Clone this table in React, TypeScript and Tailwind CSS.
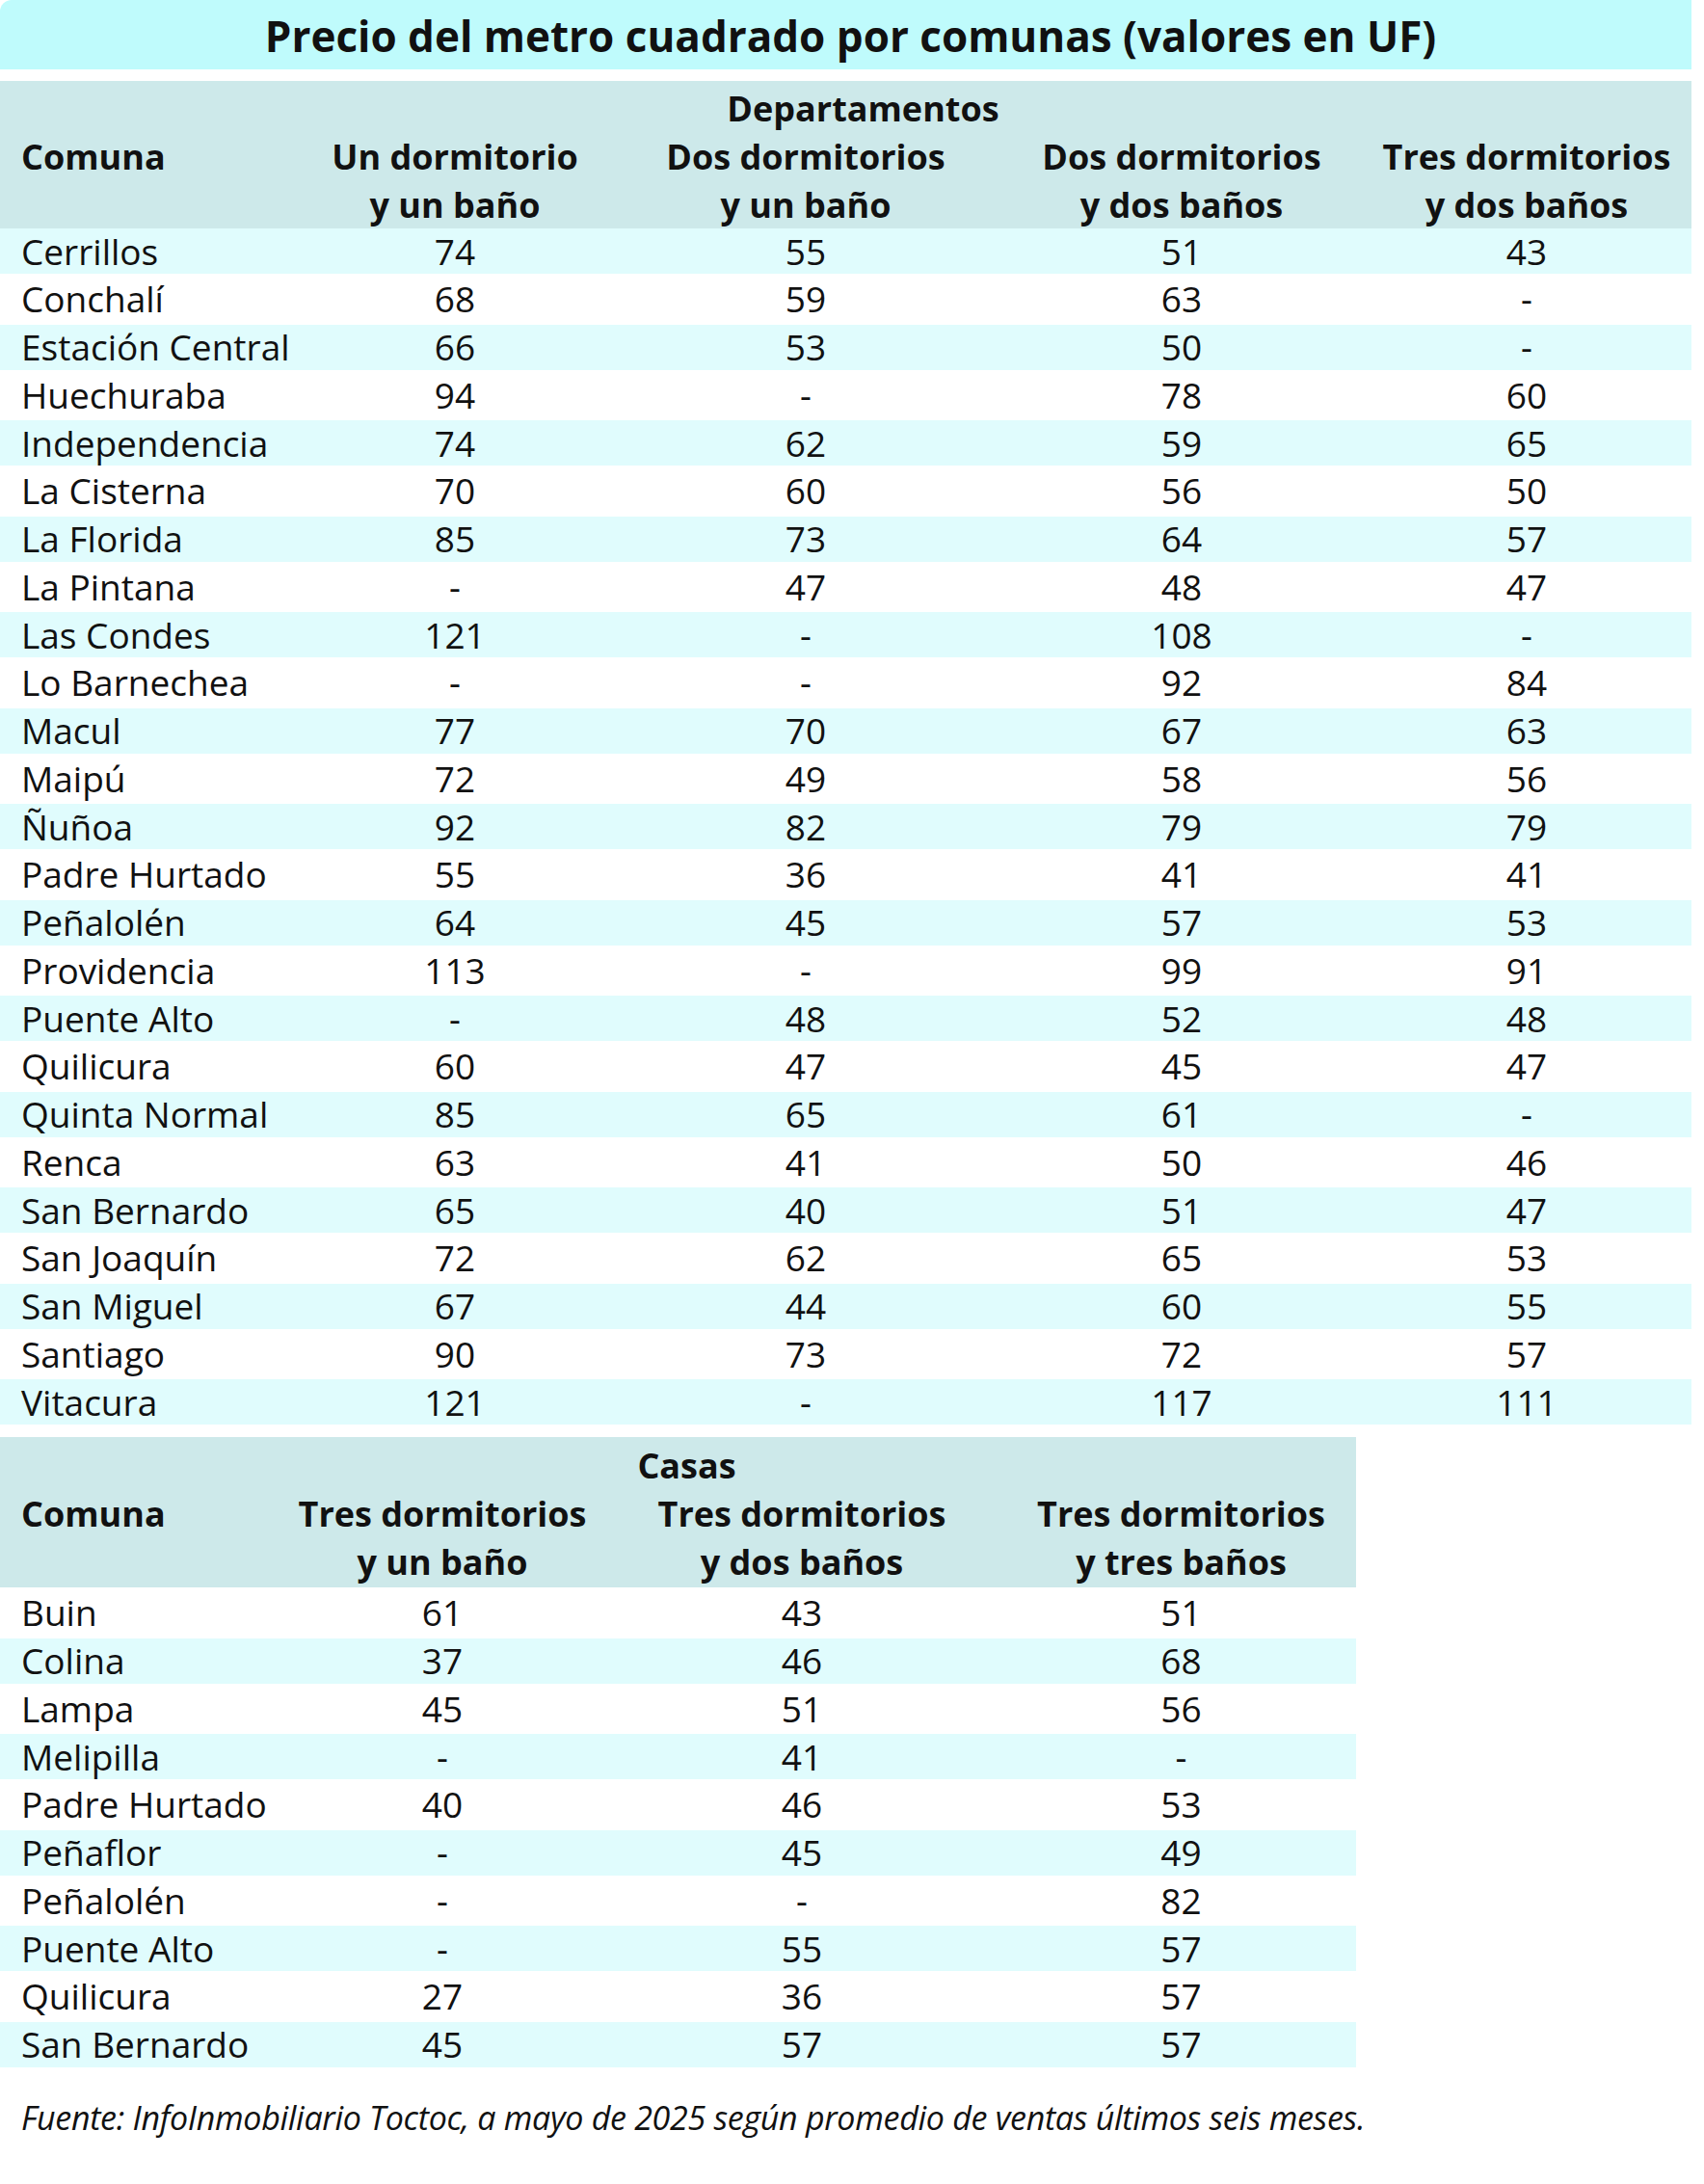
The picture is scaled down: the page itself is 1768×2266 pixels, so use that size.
const departamentos: [string, string, string, string, string][] = [
  ["Cerrillos", "74", "55", "51", "43"],
  ["Conchalí", "68", "59", "63", "-"],
  ["Estación Central", "66", "53", "50", "-"],
  ["Huechuraba", "94", "-", "78", "60"],
  ["Independencia", "74", "62", "59", "65"],
  ["La Cisterna", "70", "60", "56", "50"],
  ["La Florida", "85", "73", "64", "57"],
  ["La Pintana", "-", "47", "48", "47"],
  ["Las Condes", "121", "-", "108", "-"],
  ["Lo Barnechea", "-", "-", "92", "84"],
  ["Macul", "77", "70", "67", "63"],
  ["Maipú", "72", "49", "58", "56"],
  ["Ñuñoa", "92", "82", "79", "79"],
  ["Padre Hurtado", "55", "36", "41", "41"],
  ["Peñalolén", "64", "45", "57", "53"],
  ["Providencia", "113", "-", "99", "91"],
  ["Puente Alto", "-", "48", "52", "48"],
  ["Quilicura", "60", "47", "45", "47"],
  ["Quinta Normal", "85", "65", "61", "-"],
  ["Renca", "63", "41", "50", "46"],
  ["San Bernardo", "65", "40", "51", "47"],
  ["San Joaquín", "72", "62", "65", "53"],
  ["San Miguel", "67", "44", "60", "55"],
  ["Santiago", "90", "73", "72", "57"],
  ["Vitacura", "121", "-", "117", "111"],
];

const casas: [string, string, string, string][] = [
  ["Buin", "61", "43", "51"],
  ["Colina", "37", "46", "68"],
  ["Lampa", "45", "51", "56"],
  ["Melipilla", "-", "41", "-"],
  ["Padre Hurtado", "40", "46", "53"],
  ["Peñaflor", "-", "45", "49"],
  ["Peñalolén", "-", "-", "82"],
  ["Puente Alto", "-", "55", "57"],
  ["Quilicura", "27", "36", "57"],
  ["San Bernardo", "45", "57", "57"],
];

const deptCols = "grid grid-cols-[290px_364px_364px_416px_321px]";
const casaCols = "grid grid-cols-[270px_378px_368px_391px]";

const App = () => {
  return (
    <div className="w-[1768px] h-[2266px] bg-white text-[#111] font-['Open_Sans',sans-serif] text-[37px] leading-[46px]">
      <div className="w-[1755px]">
        {/* Title */}
        <div className="h-[72px] bg-[#bffbfc] rounded-tl-[12px] flex items-center justify-center pl-[10px] pt-[2px]">
          <h1 className="font-bold text-[44px] leading-[60px] whitespace-nowrap">
            Precio del metro cuadrado por comunas (valores en UF)
          </h1>
        </div>

        {/* Departamentos */}
        <div className="mt-[12px] bg-[#cde9ea] pt-[4px] font-bold text-[36px] leading-[50px] h-[153px]">
          <div className="text-center pl-[36px]">Departamentos</div>
          <div className={deptCols}>
            <div className="pl-[22px]">Comuna</div>
            <div className="text-center whitespace-nowrap">
              Un dormitorio
              <br />y un baño
            </div>
            <div className="text-center whitespace-nowrap">
              Dos dormitorios
              <br />y un baño
            </div>
            <div className="text-center whitespace-nowrap">
              Dos dormitorios
              <br />y dos baños
            </div>
            <div className="text-center whitespace-nowrap pr-[21px]">
              Tres dormitorios
              <br />y dos baños
            </div>
          </div>
        </div>
        <div>
          {departamentos.map((row, i) => (
            <div
              key={row[0]}
              className={`${deptCols} items-center ${i % 2 === 0 ? "h-[47px] bg-[#e0fcfd]" : "h-[52.5px]"}`}
            >
              <div className="pl-[22px] whitespace-nowrap">{row[0]}</div>
              <div className="text-center">{row[1]}</div>
              <div className="text-center">{row[2]}</div>
              <div className="text-center">{row[3]}</div>
              <div className="text-center pr-[21px]">{row[4]}</div>
            </div>
          ))}
        </div>

        {/* Casas */}
        <div className="w-[1407px] mt-[13px]">
          <div className="bg-[#cde9ea] pt-[5px] font-bold text-[36px] leading-[50px] h-[156px]">
            <div className="text-center pl-[18px]">Casas</div>
            <div className={casaCols}>
              <div className="pl-[22px]">Comuna</div>
              <div className="text-center whitespace-nowrap">
                Tres dormitorios
                <br />y un baño
              </div>
              <div className="text-center whitespace-nowrap">
                Tres dormitorios
                <br />y dos baños
              </div>
              <div className="text-center whitespace-nowrap pl-[28px]">
                Tres dormitorios
                <br />y tres baños
              </div>
            </div>
          </div>
          {casas.map((row, i) => (
            <div
              key={row[0]}
              className={`${casaCols} items-center ${i % 2 === 1 ? "h-[47px] bg-[#e0fcfd]" : "h-[52.5px]"}`}
            >
              <div className="pl-[22px] whitespace-nowrap">{row[0]}</div>
              <div className="text-center">{row[1]}</div>
              <div className="text-center">{row[2]}</div>
              <div className="text-center pl-[28px]">{row[3]}</div>
            </div>
          ))}
        </div>

        <p className="mt-[27px] pl-[22px] italic text-[34px] tracking-[-0.3px] leading-[50px] whitespace-nowrap">
          Fuente: InfoInmobiliario Toctoc, a mayo de 2025 según promedio de ventas últimos seis meses.
        </p>
      </div>
    </div>
  );
};

export default App;
